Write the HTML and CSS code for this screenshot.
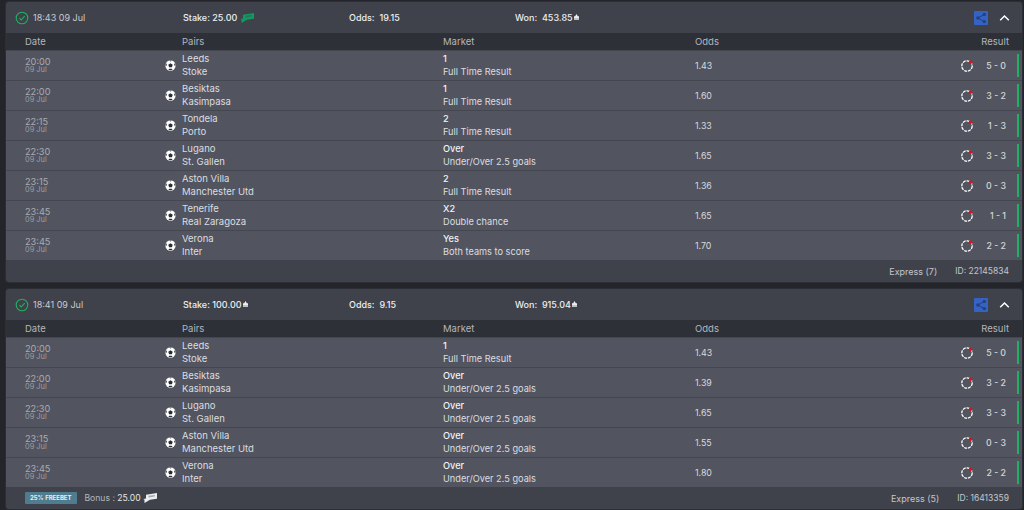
FILE: index.html
```html
<!DOCTYPE html>
<html lang="en">
<head>
<meta charset="utf-8">
<title>Bet history</title>
<link rel="stylesheet" href="styles.css">
</head>
<body>
<svg class="defs" width="0" height="0" aria-hidden="true">
  <symbol id="ball" viewBox="0 0 12 12">
    <circle cx="6" cy="6" r="5.6" fill="#fff"/>
    <path d="M6 3.5 8.4 5.2 7.5 8H4.5L3.6 5.2Z" fill="#2a2d33"/>
    <path d="M4.6.9Q6 .3 7.4.9L6 1.7ZM1 3.4 2 4.6 1.5 6.6.5 6ZM11 3.4 10 4.6 10.5 6.6 11.5 6ZM3.7 10.6 4.7 9.6H7.3L8.3 10.6Q6 11.6 3.7 10.6Z" fill="#2a2d33"/>
  </symbol>
  <symbol id="clock" viewBox="0 0 14 14">
    <circle cx="7" cy="7" r="5.2" fill="none" stroke="#fff" stroke-width="1.3" stroke-dasharray="3 .9"/>
    <circle cx="10.6" cy="3.2" r="1.8" fill="#e0101c"/>
  </symbol>
  <symbol id="share" viewBox="0 0 14 14">
    <path d="M10.3 3.4 3.9 7l6.4 3.6" fill="none" stroke="#24407f" stroke-width="1"/>
    <circle cx="10.3" cy="3.4" r="1.7" fill="#24407f"/><circle cx="3.9" cy="7" r="1.7" fill="#24407f"/><circle cx="10.3" cy="10.6" r="1.7" fill="#24407f"/>
  </symbol>
  <symbol id="check" viewBox="0 0 14 14">
    <circle cx="7" cy="7" r="5.8" fill="none" stroke="#1fb160" stroke-width="1.1"/>
    <path d="M4.4 7.2 6.2 9 9.7 5.2" fill="none" stroke="#1fb160" stroke-width="1.1"/>
  </symbol>
  <symbol id="chevron" viewBox="0 0 11 8">
    <path d="M1.2 6.2 5.5 2l4.3 4.2" fill="none" stroke="#fff" stroke-width="1.5"/>
  </symbol>
  <symbol id="coin" viewBox="0 0 6 7">
    <path d="M3 0 4.6 2.6H6V5.6H0V2.6H1.4Z" fill="currentColor"/>
    <path d="M0 6.2H6V7H0Z" fill="currentColor"/>
  </symbol>
  <symbol id="ticket" viewBox="0 0 14 10">
    <path d="M3 1.8 14 0V5.8L7 6.8 1.5 10 1.4 6.6 0 6 3 5.4Z" fill="currentColor"/>
    <path d="M5.5 2.7 11.8 1.9V3.6L5.5 4.4Z" fill="#3f424b" opacity=".4"/>
  </symbol>
</svg>

<main class="list">
  <section class="card">
    <header class="head">
      <div class="when"><svg class="i-check"><use href="#check"/></svg><span>18:43 09 Jul</span></div>
      <div class="stake">Stake: 25.00 <svg class="i-ticket green"><use href="#ticket"/></svg></div>
      <div class="odds-total">Odds:&nbsp; 19.15</div>
      <div class="won">Won:&nbsp; 453.85<svg class="i-coin"><use href="#coin"/></svg></div>
      <div class="actions"><span class="share"><svg class="i-share"><use href="#share"/></svg></span><svg class="i-chev"><use href="#chevron"/></svg></div>
    </header>
    <div class="row titles"><span>Date</span><span></span><span>Pairs</span><span>Market</span><span>Odds</span><span class="r">Result</span></div>
    <div class="row"><div class="t"><b>20:00</b><i>09 Jul</i></div><svg class="i-ball"><use href="#ball"/></svg><div class="two"><span>Leeds</span><span>Stoke</span></div><div class="two mk"><span class="w">1</span><span>Full Time Result</span></div><span class="o">1.43</span><div class="res"><svg class="i-clock"><use href="#clock"/></svg><span class="score">5 - 0</span><span class="bar"></span></div></div>
    <div class="row"><div class="t"><b>22:00</b><i>09 Jul</i></div><svg class="i-ball"><use href="#ball"/></svg><div class="two"><span>Besiktas</span><span>Kasimpasa</span></div><div class="two mk"><span class="w">1</span><span>Full Time Result</span></div><span class="o">1.60</span><div class="res"><svg class="i-clock"><use href="#clock"/></svg><span class="score">3 - 2</span><span class="bar"></span></div></div>
    <div class="row"><div class="t"><b>22:15</b><i>09 Jul</i></div><svg class="i-ball"><use href="#ball"/></svg><div class="two"><span>Tondela</span><span>Porto</span></div><div class="two mk"><span class="w">2</span><span>Full Time Result</span></div><span class="o">1.33</span><div class="res"><svg class="i-clock"><use href="#clock"/></svg><span class="score">1 - 3</span><span class="bar"></span></div></div>
    <div class="row"><div class="t"><b>22:30</b><i>09 Jul</i></div><svg class="i-ball"><use href="#ball"/></svg><div class="two"><span>Lugano</span><span>St. Gallen</span></div><div class="two mk"><span class="w">Over</span><span>Under/Over 2.5 goals</span></div><span class="o">1.65</span><div class="res"><svg class="i-clock"><use href="#clock"/></svg><span class="score">3 - 3</span><span class="bar"></span></div></div>
    <div class="row"><div class="t"><b>23:15</b><i>09 Jul</i></div><svg class="i-ball"><use href="#ball"/></svg><div class="two"><span>Aston Villa</span><span>Manchester Utd</span></div><div class="two mk"><span class="w">2</span><span>Full Time Result</span></div><span class="o">1.36</span><div class="res"><svg class="i-clock"><use href="#clock"/></svg><span class="score">0 - 3</span><span class="bar"></span></div></div>
    <div class="row"><div class="t"><b>23:45</b><i>09 Jul</i></div><svg class="i-ball"><use href="#ball"/></svg><div class="two"><span>Tenerife</span><span>Real Zaragoza</span></div><div class="two mk"><span class="w">X2</span><span>Double chance</span></div><span class="o">1.65</span><div class="res"><svg class="i-clock"><use href="#clock"/></svg><span class="score">1 - 1</span><span class="bar"></span></div></div>
    <div class="row"><div class="t"><b>23:45</b><i>09 Jul</i></div><svg class="i-ball"><use href="#ball"/></svg><div class="two"><span>Verona</span><span>Inter</span></div><div class="two mk"><span class="w">Yes</span><span>Both teams to score</span></div><span class="o">1.70</span><div class="res"><svg class="i-clock"><use href="#clock"/></svg><span class="score">2 - 2</span><span class="bar"></span></div></div>
    <footer class="foot"><span class="spacer"></span><span>Express (7)</span><span class="id">ID: 22145834</span></footer>
  </section>

  <section class="card">
    <header class="head">
      <div class="when"><svg class="i-check"><use href="#check"/></svg><span>18:41 09 Jul</span></div>
      <div class="stake">Stake: 100.00<svg class="i-coin"><use href="#coin"/></svg></div>
      <div class="odds-total">Odds:&nbsp; 9.15</div>
      <div class="won">Won:&nbsp; 915.04<svg class="i-coin"><use href="#coin"/></svg></div>
      <div class="actions"><span class="share"><svg class="i-share"><use href="#share"/></svg></span><svg class="i-chev"><use href="#chevron"/></svg></div>
    </header>
    <div class="row titles"><span>Date</span><span></span><span>Pairs</span><span>Market</span><span>Odds</span><span class="r">Result</span></div>
    <div class="row"><div class="t"><b>20:00</b><i>09 Jul</i></div><svg class="i-ball"><use href="#ball"/></svg><div class="two"><span>Leeds</span><span>Stoke</span></div><div class="two mk"><span class="w">1</span><span>Full Time Result</span></div><span class="o">1.43</span><div class="res"><svg class="i-clock"><use href="#clock"/></svg><span class="score">5 - 0</span><span class="bar"></span></div></div>
    <div class="row"><div class="t"><b>22:00</b><i>09 Jul</i></div><svg class="i-ball"><use href="#ball"/></svg><div class="two"><span>Besiktas</span><span>Kasimpasa</span></div><div class="two mk"><span class="w">Over</span><span>Under/Over 2.5 goals</span></div><span class="o">1.39</span><div class="res"><svg class="i-clock"><use href="#clock"/></svg><span class="score">3 - 2</span><span class="bar"></span></div></div>
    <div class="row"><div class="t"><b>22:30</b><i>09 Jul</i></div><svg class="i-ball"><use href="#ball"/></svg><div class="two"><span>Lugano</span><span>St. Gallen</span></div><div class="two mk"><span class="w">Over</span><span>Under/Over 2.5 goals</span></div><span class="o">1.65</span><div class="res"><svg class="i-clock"><use href="#clock"/></svg><span class="score">3 - 3</span><span class="bar"></span></div></div>
    <div class="row"><div class="t"><b>23:15</b><i>09 Jul</i></div><svg class="i-ball"><use href="#ball"/></svg><div class="two"><span>Aston Villa</span><span>Manchester Utd</span></div><div class="two mk"><span class="w">Over</span><span>Under/Over 2.5 goals</span></div><span class="o">1.55</span><div class="res"><svg class="i-clock"><use href="#clock"/></svg><span class="score">0 - 3</span><span class="bar"></span></div></div>
    <div class="row"><div class="t"><b>23:45</b><i>09 Jul</i></div><svg class="i-ball"><use href="#ball"/></svg><div class="two"><span>Verona</span><span>Inter</span></div><div class="two mk"><span class="w">Over</span><span>Under/Over 2.5 goals</span></div><span class="o">1.80</span><div class="res"><svg class="i-clock"><use href="#clock"/></svg><span class="score">2 - 2</span><span class="bar"></span></div></div>
    <footer class="foot"><span class="badge">25% FREEBET</span><span class="bonus">Bonus : <em>25.00</em><svg class="i-ticket"><use href="#ticket"/></svg></span><span class="spacer"></span><span>Express (5)</span><span class="id">ID: 16413359</span></footer>
  </section>
</main>
</body>
</html>
```

FILE: styles.css
```css
* { box-sizing: border-box; }
html, body { margin: 0; height: 510px; overflow: hidden; }
body {
  background: #23252b;
  font-family: Inter, "Open Sans", sans-serif;
  font-size: 9.5px;
  color: #d8dade;
}
.defs { position: absolute; }
.list {
  display: flex;
  flex-direction: column;
  gap: 7px;
  padding: 2px 2px 0 6px;
}
.card {
  background: #3f424b;
  border-radius: 3px;
  overflow: hidden;
  flex: none;
  box-shadow: 0 0 0 1px #2c2e35;
}
.head {
  height: 31px;
  display: grid;
  grid-template-columns: 168px 166px 166px 1fr auto;
  align-items: center;
  padding-left: 9px;
  padding-right: 12px;
}
.when { display: flex; align-items: center; gap: 4px; color: #c9cbd0; font-size: 9px; }
.stake, .won, .odds-total { color: #eceef0; font-size: 9px; font-weight: 500; display: flex; align-items: center; white-space: pre; }
.i-check { width: 14px; height: 14px; }
.i-coin { width: 5px; height: 6px; margin-left: 1px; margin-top: -1px; color: #eceef0; }
.i-ticket { width: 14px; height: 10px; margin-left: 2px; color: #eceef0; }
.green { color: #0f9a60; margin-left: 0; }
.actions { display: flex; align-items: center; gap: 11px; }
.share {
  width: 14px; height: 14px;
  background: #3563c3;
  border-radius: 1px;
  display: flex;
}
.i-share { width: 14px; height: 14px; }
.i-chev { width: 11px; height: 8px; }
.row {
  height: 30px;
  display: grid;
  grid-template-columns: 140px 17px 261px 252px 1fr auto;
  align-items: center;
  padding-left: 19px;
  background: #52555f;
  border-top: 1px solid #44474f;
}
.titles {
  height: 17px;
  background: #2e3037;
  border-top: 0;
  color: #b4b6bb;
  padding-right: 13px;
}
.r { text-align: right; }
.t { display: flex; flex-direction: column; padding-bottom: 1px; }
.t b { font-weight: 400; font-size: 9.2px; color: #a9abb1; line-height: 9px; }
.t i { font-style: normal; font-size: 7.4px; color: #9a9ca3; line-height: 8px; }
.i-ball { width: 11px; height: 11px; }
.two { display: flex; flex-direction: column; gap: 1px; line-height: 12px; color: #dcdde0; }
.mk { font-size: 9.2px; }
.w { color: #f2f3f4; font-weight: 500; }
.o { color: #d8dade; font-size: 8.8px; }
.res { display: flex; align-items: center; height: 100%; }
.i-clock { width: 14px; height: 14px; }
.score { width: 32px; text-align: right; color: #d4d5d9; font-size: 8.8px; font-weight: 500; }
.bar { width: 2px; height: 23px; margin: 0 3px 0 11px; background: #1fb160; }
.foot {
  height: 22px;
  display: flex;
  align-items: center;
  padding: 0 13px 0 19px;
  color: #c4c6cb;
  font-size: 9px;
}
.spacer { flex: 1; }
.id { margin-left: 18px; font-size: 8.5px; }
.badge {
  background: #4f7d8f;
  color: #e8eef0;
  font-size: 6px;
  font-weight: 700;
  padding: 0 5px;
  height: 12px;
  line-height: 12px;
  border-radius: 1px;
}
.bonus { margin-left: 8px; display: flex; align-items: center; color: #b4b6bb; white-space: pre; font-size: 8.6px; }
.bonus em { font-style: normal; color: #e4e5e8; }
```
